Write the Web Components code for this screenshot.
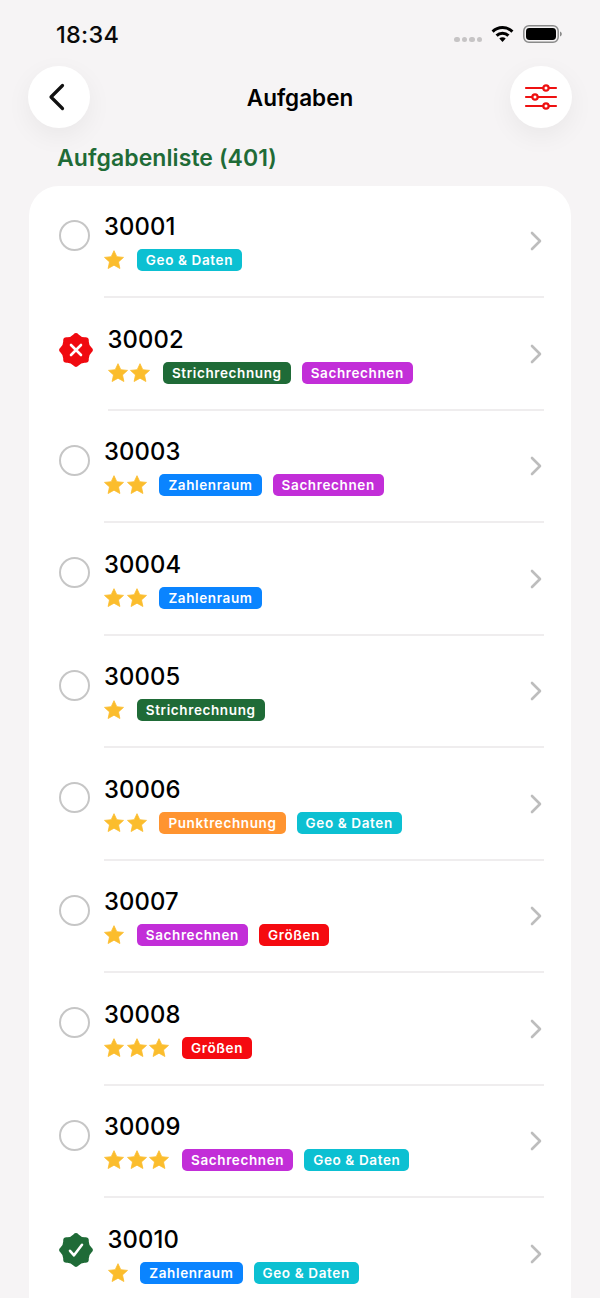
<!DOCTYPE html>
<html lang="de"><head><meta charset="utf-8"><title>Aufgaben</title>
<style>
html,body{margin:0;padding:0;background:#f6f4f5;height:1298px;overflow:hidden}
body{font-family:Inter,"Liberation Sans",sans-serif;color:#000}
</style></head><body>
<app-screen>
<status-bar></status-bar>
<nav-bar title="Aufgaben"></nav-bar>
<section-title>Aufgabenliste (401)</section-title>
<task-card>
<task-row num="30001" stars="1" tags="geo"></task-row>
<task-row num="30002" stars="2" tags="strich,sach" state="fail"></task-row>
<task-row num="30003" stars="2" tags="zahl,sach"></task-row>
<task-row num="30004" stars="2" tags="zahl"></task-row>
<task-row num="30005" stars="1" tags="strich"></task-row>
<task-row num="30006" stars="2" tags="punkt,geo"></task-row>
<task-row num="30007" stars="1" tags="sach,groe"></task-row>
<task-row num="30008" stars="3" tags="groe"></task-row>
<task-row num="30009" stars="3" tags="sach,geo"></task-row>
<task-row num="30010" stars="1" tags="zahl,geo" state="done"></task-row>
</task-card>
</app-screen>
<script>
function el(name,css,html){
  customElements.define(name,class extends HTMLElement{
    connectedCallback(){
      const r=this.attachShadow({mode:'open'});
      r.innerHTML='<style>'+css+'</style>'+(typeof html==='function'?html(this):html);
    }
  });
}
el('app-screen',':host{display:block;height:1298px;overflow:hidden}','<slot></slot>');
el('status-bar',`:host{display:flex;align-items:center;height:66px;box-sizing:border-box;padding:0 38px 0 56px}
.t{font-size:23.500px;font-weight:550;letter-spacing:.25px;line-height:66px;flex:1;margin-top:3px;color:#0a0a0a}
.dots{display:flex;gap:2px;margin:13px 9px 0 0}
.dots i{width:5.500px;height:5.500px;border-radius:50%;background:#c6c4c5}
svg{display:block}`,
`<span class="t">18:34</span><span class="dots"><i></i><i></i><i></i><i></i></span>
<svg width="23" height="18" viewBox="0 0 23 18" style="margin:2px 9px 0 0"><path d="M1.600 6.600A14 14 0 0 1 21.400 6.600" fill="none" stroke="#000" stroke-width="3"/><path d="M5.600 10.600A8.400 8.400 0 0 1 17.400 10.600" fill="none" stroke="#000" stroke-width="3"/><path d="M8.300 13.600 11.500 17 14.700 13.600A4.600 4.600 0 0 0 8.300 13.600Z" fill="#000"/></svg>
<svg width="39" height="18" viewBox="0 0 39 18" style="margin-top:2px"><rect x=".8" y=".8" width="34.400" height="16.400" rx="5.200" fill="none" stroke="#8a8a8a" stroke-width="1.500"/><rect x="3" y="3" width="30" height="12" rx="3.400" fill="#000"/><path d="M37 6.500c1.200.4 1.800 1.300 1.800 2.500s-.6 2.100-1.800 2.500z" fill="#8a8a8a"/></svg>`);
const btn=`width:62px;height:62px;border-radius:50%;background:#fff;box-shadow:0 8px 26px rgba(0,0,0,.055);display:flex;align-items:center;justify-content:center`;
el('nav-bar',`:host{display:flex;align-items:center;justify-content:space-between;padding:0 28px;height:62px}
.b{${btn}} h1{margin:2px 0 0;font-size:22.500px;font-weight:570;line-height:62px}svg{display:block}`,
h=>`<div class="b"><svg width="20" height="30" viewBox="0 0 20 30" style="margin-left:-4px"><path d="M15.500 3.500 4 15l11.500 11.500" fill="none" stroke="#111" stroke-width="3.200" stroke-linecap="round" stroke-linejoin="round"/></svg></div>
<h1>${h.getAttribute('title')}</h1>
<div class="b"><svg width="34" height="26" viewBox="0 0 34 26"><g stroke="#ee1111" stroke-width="2.200" fill="none" stroke-linecap="round"><path d="M2 4h17.300M24.700 4h7.300M2 13h6.300M13.700 13h18.300M2 22h17.300M24.700 22h7.300"/><circle cx="22" cy="4" r="2.700"/><circle cx="11" cy="13" r="2.700"/><circle cx="22" cy="22" r="2.700"/></g></svg></div>`);
el('section-title',`:host{display:block;padding:0 57px;height:58px;box-sizing:border-box;font-size:23px;font-weight:560;line-height:60px;letter-spacing:.08px;color:#1f6b37}`,'<slot></slot>');
el('task-card',`:host{display:block;margin:0 29px;background:#fff;border-radius:30px 30px 0 0}`,'<slot></slot>');
const TAGS={geo:['Geo & Daten','#0cc0d2'],strich:['Strichrechnung','#1f6b37'],sach:['Sachrechnen','#c22ed8'],zahl:['Zahlenraum','#0a84ff'],punkt:['Punktrechnung','#ff9430'],groe:['Größen','#f50a10']};
const star=`<svg width="20" height="20" viewBox="0 0 20 20"><path d="M10 .7 12.800 6.700 19.500 7.400 14.500 11.900 15.900 18.500 10 15.200 4.100 18.500 5.500 11.900 .5 7.400 7.200 6.700Z" fill="#fbbd2d" stroke="#fbbd2d" stroke-width=".8" stroke-linejoin="round"/></svg>`;
function badgePath(){
  const n=16,c=17,P=[];
  for(let i=0;i<n;i++){const a=i/n*Math.PI*2-Math.PI/2,r=i%2?13.6:18.4;P.push([c+r*Math.cos(a),c+r*Math.sin(a)]);}
  const m=(a,b)=>((a[0]+b[0])/2).toFixed(2)+' '+((a[1]+b[1])/2).toFixed(2);
  let d='M'+m(P[n-1],P[0]);
  for(let i=0;i<n;i++)d+='Q'+P[i][0].toFixed(2)+' '+P[i][1].toFixed(2)+' '+m(P[i],P[(i+1)%n]);
  return d+'Z';
}
function stateIcon(s){
  if(s==='fail')return `<svg class="ic" width="34" height="34" viewBox="0 0 34 34"><path d="${badgePath()}" fill="#f00a10"/><path d="M12 12 22 22M22 12 12 22" stroke="#fff" stroke-width="2.600" stroke-linecap="round"/></svg>`;
  if(s==='done')return `<svg class="ic" width="34" height="34" viewBox="0 0 34 34"><path d="${badgePath()}" fill="#1f6b37"/><path d="M11 17.800 15 22.300 23 11.800" fill="none" stroke="#fff" stroke-width="2.600" stroke-linecap="round" stroke-linejoin="round"/></svg>`;
  return `<span class="ring"></span>`;
}
el('task-row',`:host{display:flex;align-items:stretch;height:112.500px;padding-left:30px;box-sizing:border-box}
.ring{display:block;box-sizing:border-box;width:31px;height:31px;border:2.500px solid #c6c6c6;border-radius:50%;flex:none}
.ic{display:block;flex:none;margin-top:5px}
.icw{display:flex;align-items:center;height:100%;padding-bottom:14px;box-sizing:border-box;flex:none}
.body{flex:1;min-width:0;margin:0 27px .5px 14px;position:relative;display:flex;flex-direction:column;box-sizing:border-box;border-bottom:2px solid #efedee}
.body.b{margin-left:14.500px}
.num{font-size:23.800px;font-weight:500;line-height:30px;margin-top:26px;letter-spacing:.1px}
.meta{display:flex;align-items:center;margin-top:7px;height:22px}
.stars{display:flex;gap:2.600px;margin-right:12.800px}.stars svg{display:block}
.tags{display:flex;gap:11px}
.tag{height:22px;border-radius:5px;padding:0 9px;color:#fff;font-size:13.500px;font-weight:600;line-height:22px;letter-spacing:.62px;white-space:nowrap}
.chev{position:absolute;right:2px;top:45px}`,
h=>{const s=+h.getAttribute('stars');const t=h.getAttribute('tags').split(',');const st=h.getAttribute('state');
return `<div class="icw">${stateIcon(st)}</div>
<div class="body${st?' b':''}"><div class="num">${h.getAttribute('num')}</div>
<div class="meta"><div class="stars">${star.repeat(s)}</div><div class="tags">${t.map(k=>`<span class="tag" style="background:${TAGS[k][1]}">${TAGS[k][0]}</span>`).join('')}</div></div>
<svg class="chev" width="12" height="20" viewBox="0 0 12 20"><path d="M2 2 10 10 2 18" fill="none" stroke="#bdbdbd" stroke-width="2.600" stroke-linecap="round" stroke-linejoin="round"/></svg></div>`;});
</script>
</body></html>
